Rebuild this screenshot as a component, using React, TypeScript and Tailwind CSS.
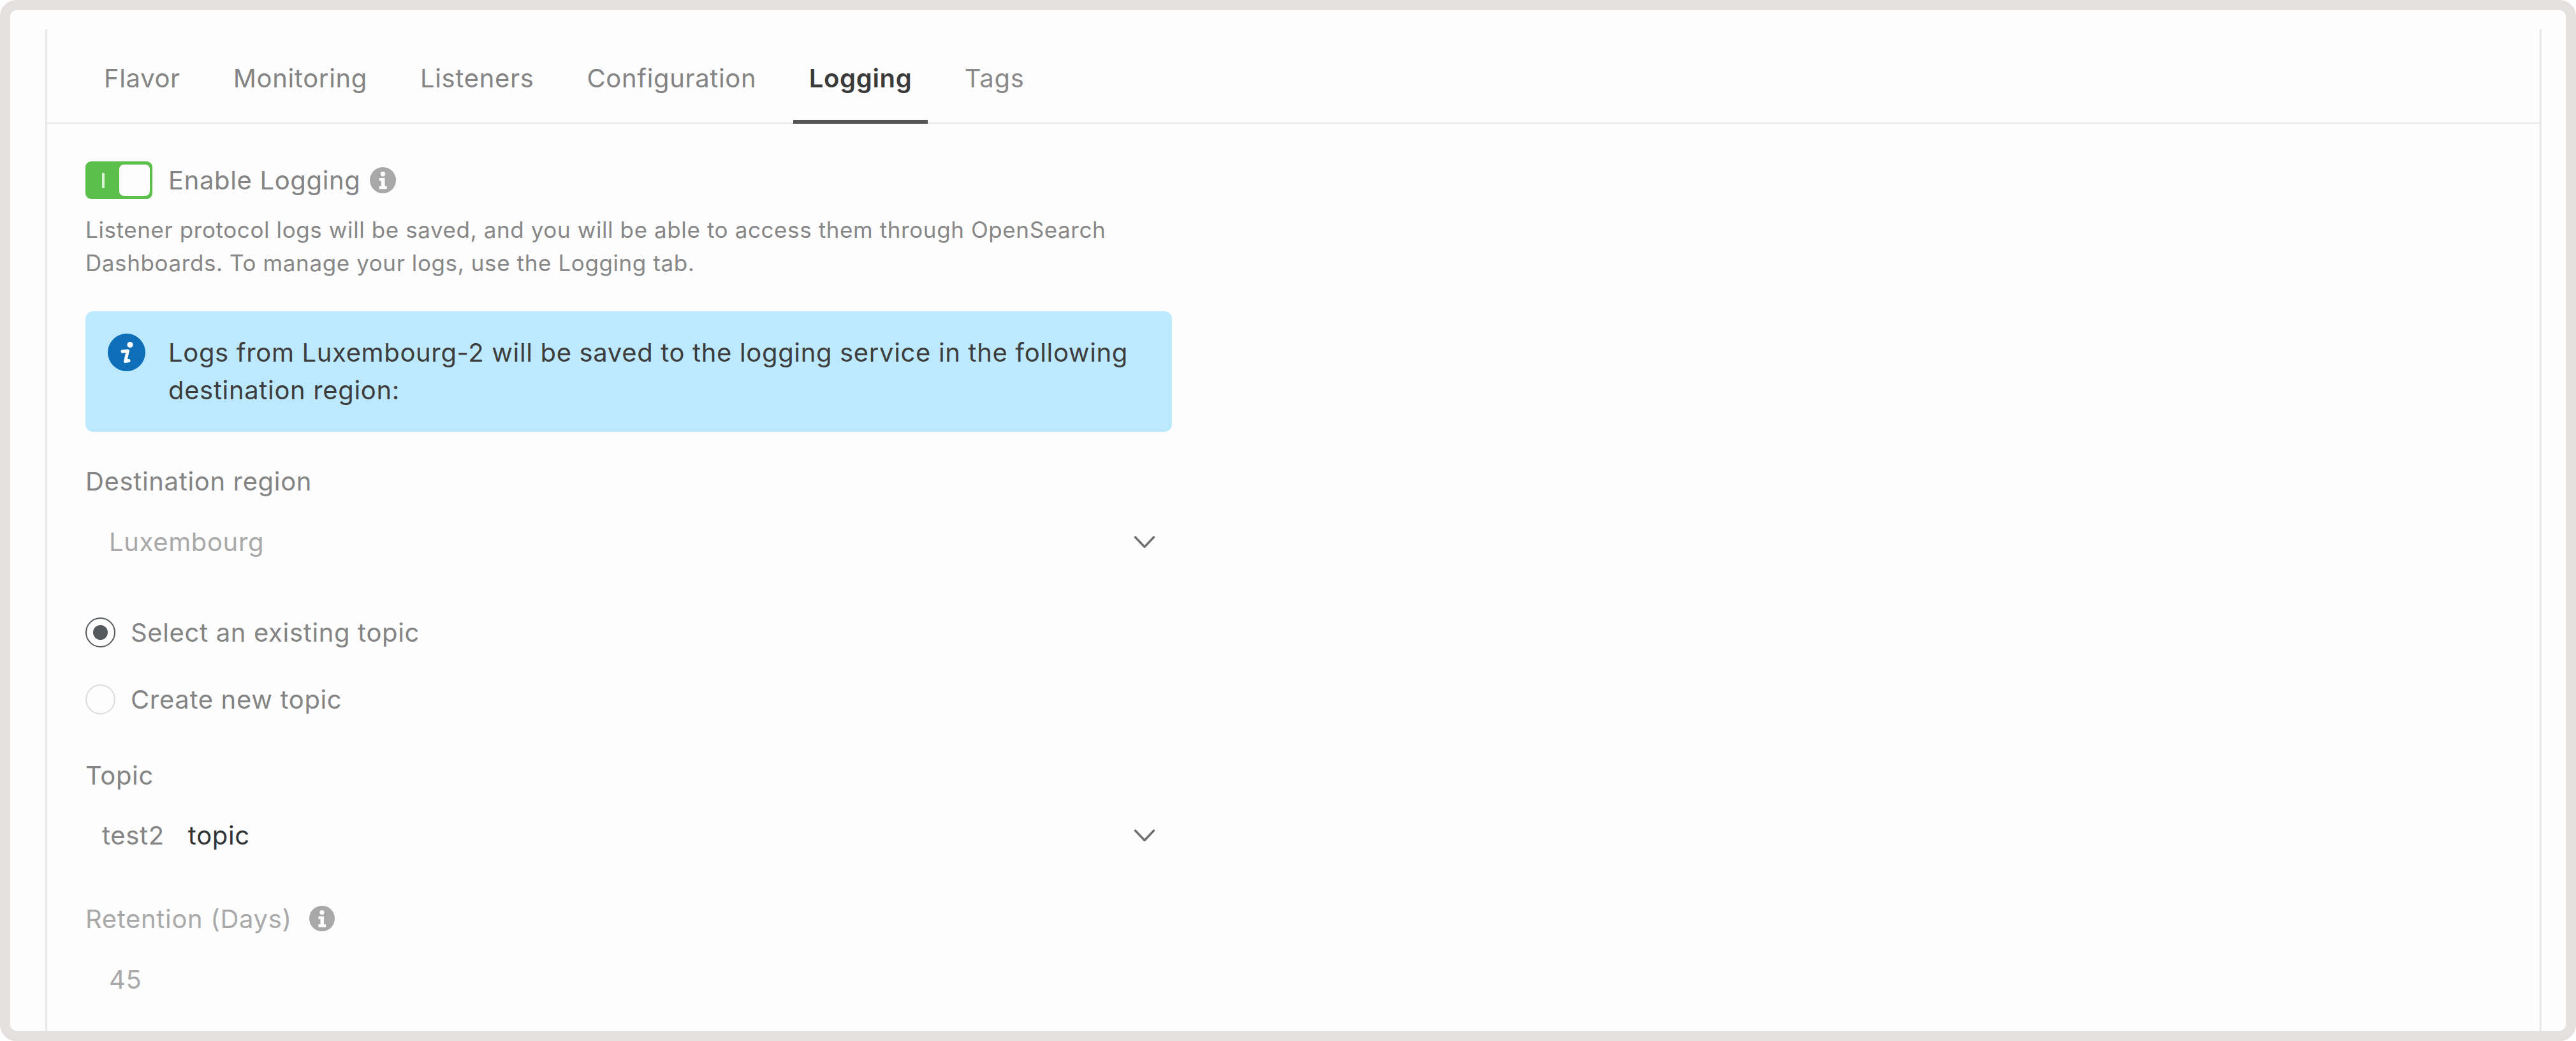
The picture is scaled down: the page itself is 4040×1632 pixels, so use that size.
import React from "react";

function InfoDot({ className }: { className: string }) {
  return (
    <svg viewBox="0 0 40 40" className={className}>
      <circle cx="20" cy="20" r="20" fill="#a8a8a8" />
      <circle cx="20" cy="10.5" r="3.6" fill="#fdfdfd" />
      <path d="M14.5 16.5h8.5v12.5h3v4.5H14.5V29h3v-8h-3z" fill="#fdfdfd" />
    </svg>
  );
}

function Chevron() {
  return (
    <svg viewBox="0 0 34 19" className="w-[34px] h-[19px] shrink-0" fill="none">
      <path d="M1.5 1L17 17.5L32.5 1" stroke="#6f6f6f" strokeWidth="3.4" />
    </svg>
  );
}

const tabs = ["Flavor", "Monitoring", "Listeners", "Configuration", "Logging", "Tags"];

export default function App() {
  return (
    <div className="w-[4040px] h-[1632px] bg-white overflow-hidden font-['Inter',sans-serif] tracking-[0.65px]">
      <div className="w-full h-full box-border border-[16px] border-[#e3e0df] rounded-[26px] bg-[#fdfdfd] overflow-hidden pt-[30px] pl-[55px] pr-[38px]">
        <div className="h-full box-border border-x-[3px] border-[#e7e7e7]">
          <div className="flex items-end gap-[33px] pt-[47px] pl-[64px] border-b-2 border-[#e7e7e7] h-[148px] box-border">
            {tabs.map((t) =>
              t === "Logging" ? (
                <div key={t} className="px-[24.5px] h-[101px] -mb-[2px] box-border border-b-[6px] border-[#555555] text-[40px] leading-[59px] font-semibold text-[#3a3a3a]">
                  {t}
                </div>
              ) : (
                <div key={t} className={`px-[25px] h-[101px] -mb-[2px] box-border text-[40px] leading-[59px] ${t === "Tags" ? "text-[#8a8a8a]" : "text-[#848484]"}`}>
                  {t}
                </div>
              )
            )}
          </div>

          <div className="pl-[60px] pt-[59px] w-[1764px] box-border">
            <div className="flex items-center h-[59px]">
              <div className="relative w-[105px] h-[59px] rounded-[9px] bg-[#5cbf4b] shrink-0 flex items-center justify-end pr-[4px] box-border">
                <div className="absolute left-[26px] top-[18px] w-[4px] h-[24px] bg-[#d8f0d3]" />
                <div className="w-[48px] h-[49px] rounded-[7px] bg-[#fdfdfd]" />
              </div>
              <span className="ml-[25px] text-[40px] leading-[59px] text-[#848484]">Enable Logging</span>
              <InfoDot className="ml-[14px] w-[41px] h-[41px]" />
            </div>

            <p className="mt-[22px] text-[35px] leading-[52px] tracking-[0.6px] text-[#878787]">
              Listener protocol logs will be saved, and you will be able to access them through OpenSearch
              <br />
              Dashboards. To manage your logs, use the Logging tab.
            </p>

            <div className="mt-[50px] w-[1704px] h-[189px] box-border rounded-[12px] bg-[#bde9ff] flex items-start pt-[35px] pl-[35px]">
              <svg viewBox="0 0 59 59" className="w-[59px] h-[59px] shrink-0">
                <circle cx="29.5" cy="29.5" r="29.5" fill="#0e6eb8" />
                <circle cx="35" cy="17.5" r="4.6" fill="#ffffff" />
                <path d="M23 28L31.5 27L27.5 43.5L33 42.5" fill="none" stroke="#ffffff" strokeWidth="5" strokeLinejoin="round" strokeLinecap="round" />
              </svg>
              <p className="ml-[36px] text-[40px] leading-[59px] text-[#3d3d3d]">
                Logs from Luxembourg-2 will be saved to the logging service in the following
                <br />
                destination region:
              </p>
            </div>

            <div className="mt-[48px] text-[40px] leading-[59px] text-[#848484]">Destination region</div>
            <div className="mt-[36px] w-[1704px] h-[59px] box-border pl-[37px] pr-[26px] flex items-center justify-between text-[40px] leading-[59px] text-[#a9a9a9]">
              <span>Luxembourg</span>
              <Chevron />
            </div>

            <div className="mt-[83px] flex items-center h-[59px]">
              <div className="w-[47px] h-[47px] box-border rounded-full border-2 border-[#555a5e] flex items-center justify-center shrink-0">
                <div className="w-[23px] h-[23px] rounded-full bg-[#555a5e]" />
              </div>
              <span className="ml-[24px] text-[40px] leading-[59px] text-[#848484]">Select an existing topic</span>
            </div>

            <div className="mt-[46px] flex items-center h-[59px]">
              <div className="w-[47px] h-[47px] box-border rounded-full border-2 border-[#dcdcdc] shrink-0" />
              <span className="ml-[24px] text-[40px] leading-[59px] text-[#848484]">Create new topic</span>
            </div>

            <div className="mt-[60px] text-[40px] leading-[59px] text-[#848484]">Topic</div>
            <div className="mt-[35px] w-[1704px] h-[59px] box-border pl-[26px] pr-[26px] flex items-center text-[40px] leading-[59px]">
              <span className="text-[#848484]">test2</span>
              <span className="ml-[37px] text-[#2f3335]">topic</span>
              <div className="ml-auto">
                <Chevron />
              </div>
            </div>

            <div className="mt-[72px] flex items-center h-[59px]">
              <span className="text-[40px] leading-[59px] text-[#a9a9a9]">Retention (Days)</span>
              <InfoDot className="ml-[27px] w-[40px] h-[40px] -translate-y-[1px]" />
            </div>
            <div className="mt-[36px] pl-[37px] text-[40px] leading-[59px] text-[#a9a9a9]">45</div>
          </div>
        </div>
      </div>
    </div>
  );
}
